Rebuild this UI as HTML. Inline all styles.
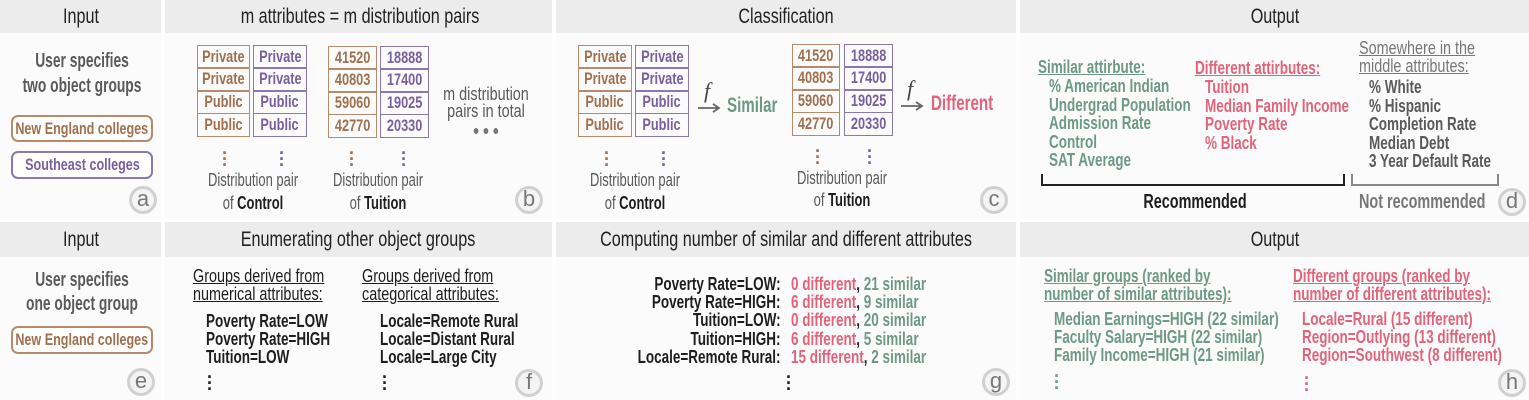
<!DOCTYPE html>
<html><head><meta charset="utf-8"><style>
*{margin:0;padding:0;box-sizing:border-box}
body{width:1529px;height:400px;background:#fff;position:relative;overflow:hidden;font-family:"Liberation Sans",sans-serif}
.p{position:absolute;background:#fbfbfb}
.h{position:absolute;background:#ececec}
.t{position:absolute;white-space:nowrap;transform-origin:0 50%;transform:scaleX(var(--s,.8));line-height:1}
.c{position:absolute;white-space:nowrap;transform-origin:50% 50%;transform:translateX(-50%) scaleX(var(--s,.8));line-height:1}
.r{position:absolute;white-space:nowrap;transform-origin:100% 50%;transform:scaleX(var(--s,.8));line-height:1;text-align:right}
.hd{font-size:21px;color:#222;--s:.77}
.b{font-weight:bold}
.bb{font-weight:bold;font-size:18px;--s:.75}
.nn{font-size:18px;--s:.8}
.br{color:#a0704f}.pu{color:#7a5fa0}.gr{color:#6e9986}.pk{color:#e2637c}.gy{color:#5a5a5a}.bk{color:#1e1e1e}
.u{text-decoration:underline}
.circ{position:absolute;width:28px;height:28px;border-radius:50%;border:3px solid #d0d0d0;background:#f4f4f4;color:#777;font-size:22px;text-align:center;line-height:20px}
.col{position:absolute}
.col div{height:24.25px;border:1.5px solid;margin-top:-1.5px;display:flex;align-items:center;justify-content:center;font-weight:bold;font-size:17px}
.col div span{transform:scaleX(.75);display:inline-block}
.cb div{border-color:#b8896a;color:#a0704f}.cp div{border-color:#8a78b0;color:#7a5fa0}
.dots{position:absolute;font-weight:bold;font-size:18px;line-height:6px;width:6px;text-align:center}
.box{position:absolute;border:2px solid;border-radius:7px;display:flex;align-items:center;justify-content:center;font-weight:bold;font-size:17px;background:#fff}
.box span{transform:scaleX(.74);display:inline-block;white-space:nowrap}
.dp{font-size:18px;--s:.72}
</style></head><body>
<div class="p" style="left:0;top:0;width:161px;height:218px"></div>
<div class="p" style="left:165px;top:0;width:387px;height:218px"></div>
<div class="p" style="left:556px;top:0;width:460px;height:218px"></div>
<div class="p" style="left:1020px;top:0;width:509px;height:218px"></div>
<div class="p" style="left:0;top:222px;width:161px;height:178px"></div>
<div class="p" style="left:165px;top:222px;width:387px;height:178px"></div>
<div class="p" style="left:556px;top:222px;width:460px;height:178px"></div>
<div class="p" style="left:1020px;top:222px;width:509px;height:178px"></div>
<div class="h" style="left:0;top:0;width:161px;height:33px"></div>
<div class="h" style="left:165px;top:0;width:387px;height:33px"></div>
<div class="h" style="left:556px;top:0;width:460px;height:33px"></div>
<div class="h" style="left:1020px;top:0;width:509px;height:33px"></div>
<div class="h" style="left:0;top:222px;width:161px;height:35px"></div>
<div class="h" style="left:165px;top:222px;width:387px;height:35px"></div>
<div class="h" style="left:556px;top:222px;width:460px;height:35px"></div>
<div class="h" style="left:1020px;top:222px;width:509px;height:35px"></div>

<div class="c hd" style="left:81px;top:6px">Input</div>
<div class="c hd" style="left:360px;top:6px">m attributes = m distribution pairs</div>
<div class="c hd" style="left:786px;top:6px">Classification</div>
<div class="c hd" style="left:1275px;top:6px">Output</div>
<div class="c hd" style="left:81px;top:229px">Input</div>
<div class="c hd" style="left:358px;top:229px">Enumerating other object groups</div>
<div class="c hd" style="left:786px;top:229px">Computing number of similar and different attributes</div>
<div class="c hd" style="left:1275px;top:229px">Output</div>

<!-- a -->
<div class="c b gy" style="left:82px;top:51px;font-size:20px;--s:.69">User specifies</div>
<div class="c b gy" style="left:82px;top:76px;font-size:20px;--s:.69">two object groups</div>
<div class="box br" style="left:11px;top:115px;width:142px;height:27px;border-color:#b8896a"><span>New England colleges</span></div>
<div class="box pu" style="left:11px;top:151px;width:142px;height:28px;border-color:#8a78b0"><span>Southeast colleges</span></div>
<div class="circ" style="left:129px;top:186px">a</div>

<!-- b -->
<div class="col cb" style="left:197px;top:46px;width:53px"><div><span>Private</span></div><div><span>Private</span></div><div><span>Public</span></div><div><span>Public</span></div></div>
<div class="col cp" style="left:253px;top:46px;width:54px"><div><span>Private</span></div><div><span>Private</span></div><div><span>Public</span></div><div><span>Public</span></div></div>
<div class="col cb" style="left:328px;top:47px;width:49px"><div><span>41520</span></div><div><span>40803</span></div><div><span>59060</span></div><div><span>42770</span></div></div>
<div class="col cp" style="left:380px;top:47px;width:49px"><div><span>18888</span></div><div><span>17400</span></div><div><span>19025</span></div><div><span>20330</span></div></div>
<div class="dots br" style="left:222px;top:150px">·<br>·<br>·</div>
<div class="dots pu" style="left:279px;top:150px">·<br>·<br>·</div>
<div class="dots br" style="left:349px;top:150px">·<br>·<br>·</div>
<div class="dots pu" style="left:401px;top:150px">·<br>·<br>·</div>
<div class="c gy dp" style="left:253px;top:171px">Distribution pair</div>
<div class="c gy dp" style="left:253px;top:194px">of <b class="bk">Control</b></div>
<div class="c gy dp" style="left:378px;top:171px">Distribution pair</div>
<div class="c gy dp" style="left:378px;top:194px">of <b class="bk">Tuition</b></div>
<div class="c gy nn" style="left:486px;top:85px">m distribution</div>
<div class="c gy nn" style="left:486px;top:102px">pairs in total</div>
<div class="c" style="left:486px;top:123px;font-size:14px;color:#777">● ● ●</div>
<div class="circ" style="left:515px;top:186px">b</div>

<!-- c -->
<div class="col cb" style="left:578px;top:46px;width:54px"><div><span>Private</span></div><div><span>Private</span></div><div><span>Public</span></div><div><span>Public</span></div></div>
<div class="col cp" style="left:635px;top:46px;width:54px"><div><span>Private</span></div><div><span>Private</span></div><div><span>Public</span></div><div><span>Public</span></div></div>
<div class="col cb" style="left:792px;top:45px;width:48px"><div><span>41520</span></div><div><span>40803</span></div><div><span>59060</span></div><div><span>42770</span></div></div>
<div class="col cp" style="left:844px;top:45px;width:49px"><div><span>18888</span></div><div><span>17400</span></div><div><span>19025</span></div><div><span>20330</span></div></div>
<div class="dots br" style="left:604px;top:150px">·<br>·<br>·</div>
<div class="dots pu" style="left:661px;top:150px">·<br>·<br>·</div>
<div class="dots br" style="left:815px;top:148px">·<br>·<br>·</div>
<div class="dots pu" style="left:867px;top:148px">·<br>·<br>·</div>
<div class="c gy dp" style="left:635px;top:171px">Distribution pair</div>
<div class="c gy dp" style="left:635px;top:194px">of <b class="bk">Control</b></div>
<div class="c gy dp" style="left:842px;top:169px">Distribution pair</div>
<div class="c gy dp" style="left:842px;top:191px">of <b class="bk">Tuition</b></div>
<svg style="position:absolute;left:696px;top:80px" width="30" height="36"><text x="8" y="18" font-family="Liberation Serif" font-style="italic" font-size="22" fill="#444">f</text><path d="M2 28H22M17 24L23 28L17 32" stroke="#666" stroke-width="1.8" fill="none"/></svg>
<div class="t b gr" style="left:727px;top:95px;font-size:21px;--s:.72">Similar</div>
<svg style="position:absolute;left:899px;top:78px" width="30" height="36"><text x="8" y="18" font-family="Liberation Serif" font-style="italic" font-size="22" fill="#444">f</text><path d="M2 28H22M17 24L23 28L17 32" stroke="#666" stroke-width="1.8" fill="none"/></svg>
<div class="t b pk" style="left:931px;top:93px;font-size:21px;--s:.72">Different</div>
<div class="circ" style="left:980px;top:186px">c</div>

<!-- d -->
<div class="t bb gr u" style="left:1038px;top:58px">Similar attirbute:</div>
<div class="t bb gr" style="left:1049px;top:77px;line-height:18.5px">% American Indian<br>Undergrad Population<br>Admission Rate<br>Control<br>SAT Average</div>
<div class="t bb pk u" style="left:1195px;top:59px">Different attirbutes:</div>
<div class="t bb pk" style="left:1205px;top:78px;line-height:18.5px">Tuition<br>Median Family Income<br>Poverty Rate<br>% Black</div>
<div class="t nn u" style="left:1359px;top:39px;line-height:18px;color:#777">Somewhere in the<br>middle attributes:</div>
<div class="t bb gy" style="left:1369px;top:78px;line-height:18.5px">% White<br>% Hispanic<br>Completion Rate<br>Median Debt<br>3 Year Default Rate</div>
<svg style="position:absolute;left:1038px;top:172px" width="470" height="16"><path d="M4 2V13H306V2" stroke="#222" stroke-width="2" fill="none"/><path d="M314 2V13H460V2" stroke="#888" stroke-width="2" fill="none"/></svg>
<div class="c b bk" style="left:1195px;top:192px;font-size:20px;--s:.72">Recommended</div>
<div class="t b" style="left:1359px;top:192px;font-size:20px;--s:.72;color:#777">Not recommended</div>
<div class="circ" style="left:1498px;top:188px">d</div>

<!-- e -->
<div class="c b gy" style="left:82px;top:270px;font-size:20px;--s:.69">User specifies</div>
<div class="c b gy" style="left:82px;top:294px;font-size:20px;--s:.69">one object group</div>
<div class="box br" style="left:11px;top:326px;width:142px;height:28px;border-color:#b8896a"><span>New England colleges</span></div>
<div class="circ" style="left:127px;top:368px">e</div>

<!-- f -->
<div class="t bk u nn" style="left:193px;top:267px;line-height:18px">Groups derived from<br>numerical attributes:</div>
<div class="t bb bk" style="left:206px;top:312px;line-height:18px">Poverty Rate=LOW<br>Poverty Rate=HIGH<br>Tuition=LOW</div>
<div class="t bk u nn" style="left:362px;top:267px;line-height:18px">Groups derived from<br>categorical attributes:</div>
<div class="t bb bk" style="left:380px;top:312px;line-height:18px">Locale=Remote Rural<br>Locale=Distant Rural<br>Locale=Large City</div>
<div class="dots bk" style="left:207px;top:374px">·<br>·<br>·</div>
<div class="dots bk" style="left:382px;top:374px">·<br>·<br>·</div>
<div class="circ" style="left:515px;top:369px">f</div>

<!-- g -->
<div class="r bb bk" style="right:748px;top:275px;line-height:18.2px">Poverty Rate=LOW:<br>Poverty Rate=HIGH:<br>Tuition=LOW:<br>Tuition=HIGH:<br>Locale=Remote Rural:</div>
<div class="t bb" style="left:791px;top:275px;line-height:18.2px"><span class="pk">0 different</span><span class="bk">,</span> <span class="gr">21 similar</span><br><span class="pk">6 different</span><span class="bk">,</span> <span class="gr">9 similar</span><br><span class="pk">0 different</span><span class="bk">,</span> <span class="gr">20 similar</span><br><span class="pk">6 different</span><span class="bk">,</span> <span class="gr">5 similar</span><br><span class="pk">15 different</span><span class="bk">,</span> <span class="gr">2 similar</span></div>
<div class="dots bk" style="left:786px;top:374px">·<br>·<br>·</div>
<div class="circ" style="left:982px;top:368px">g</div>

<!-- h -->
<div class="t bb gr u" style="left:1044px;top:267px;line-height:18px">Similar groups (ranked by<br>number of similar attributes):</div>
<div class="t bb gr" style="left:1054px;top:310px;line-height:18px">Median Earnings=HIGH (22 similar)<br>Faculty Salary=HIGH (22 similar)<br>Family Income=HIGH (21 similar)</div>
<div class="t bb pk u" style="left:1293px;top:267px;line-height:18px">Different groups (ranked by<br>number of different attributes):</div>
<div class="t bb pk" style="left:1302px;top:310px;line-height:18px">Locale=Rural (15 different)<br>Region=Outlying (13 different)<br>Region=Southwest (8 different)</div>
<div class="dots gr" style="left:1054px;top:373px">·<br>·<br>·</div>
<div class="dots pk" style="left:1304px;top:375px">·<br>·<br>·</div>
<div class="circ" style="left:1498px;top:369px">h</div>
</body></html>
